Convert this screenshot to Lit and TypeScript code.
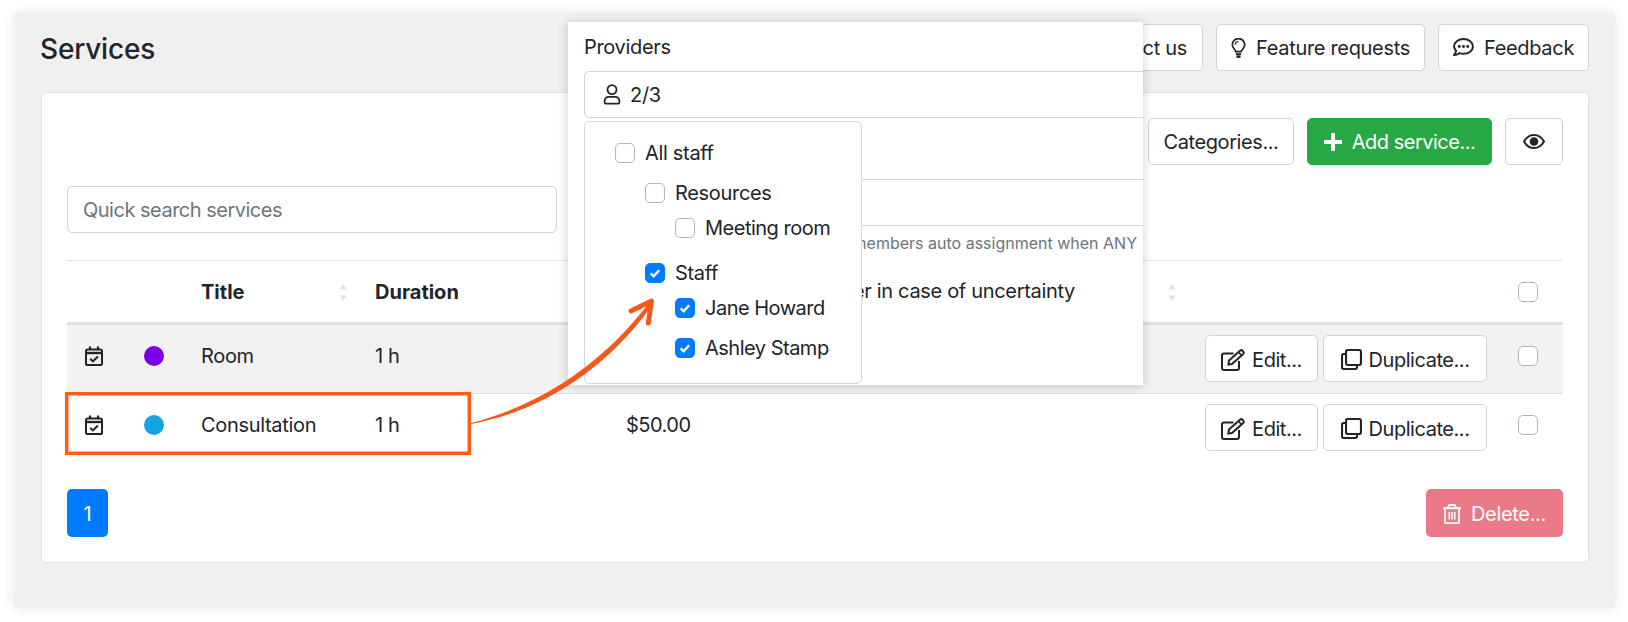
import { LitElement, html, css, svg } from "lit";
import { customElement } from "lit/decorators.js";

const calendar = html`<svg class="cal" viewBox="0 0 18 20" width="18" height="20" fill="none" stroke="#212529">
  <rect x="1" y="3.5" width="16" height="15.5" rx="1.6" stroke-width="2"/>
  <path d="M1 7h16" stroke-width="2.4"/>
  <path d="M5 .5v3M13 .5v3" stroke-width="2.2"/>
  <path d="M5.2 12.8l2.7 2.6 5-5" stroke-width="2.1"/>
</svg>`;

const editIcon = html`<svg class="ic" viewBox="0 0 24 22" width="24" height="22" fill="none" stroke="#212529" stroke-width="2">
  <path d="M12.5 4.5H3a2 2 0 0 0-2 2V19a2 2 0 0 0 2 2h13a2 2 0 0 0 2-2v-7"/>
  <path d="M8 11.5L19.2 1.6a1.6 1.6 0 0 1 2.2.1l.9 1a1.6 1.6 0 0 1-.1 2.2L11 15l-3.6.6z"/>
  <path d="M17.6 3.2l3.2 3.5" stroke-width="1.6"/>
</svg>`;

const cloneIcon = html`<svg class="ic" viewBox="0 0 20 20" width="21" height="21" fill="none" stroke="#212529" stroke-width="2">
  <rect x="4.8" y="1" width="14.2" height="14.2" rx="1.6"/>
  <path d="M4.8 4.8H2.6A1.6 1.6 0 0 0 1 6.4v11A1.6 1.6 0 0 0 2.6 19h11a1.6 1.6 0 0 0 1.6-1.6v-2.2"/>
</svg>`;

const trash = html`<svg viewBox="0 0 18 20" width="18" height="20" fill="none" stroke="#fff" stroke-width="1.8">
  <path d="M0 4.2h18" stroke-width="2"/>
  <path d="M5.5 4V2.4A1.4 1.4 0 0 1 6.9 1h4.2a1.4 1.4 0 0 1 1.4 1.4V4"/>
  <path d="M2 4.2v14a1 1 0 0 0 1 1h12a1 1 0 0 0 1-1v-14"/>
  <path d="M6.3 8v7.6M9 8v7.6M11.7 8v7.6" stroke-width="1.6"/>
</svg>`;

const bulb = html`<svg viewBox="0 0 15 21" width="15" height="20" fill="none" stroke="#212529">
  <path d="M4.6 14.4c-.4-2.4-3.6-4-3.6-7.3a6.5 6.5 0 0 1 13 0c0 3.3-3.200 4.900-3.600 7.300z" stroke-width="1.8"/>
  <path d="M4.800 17h5.400" stroke-width="2"/>
  <path d="M5.400 19.600h4.200" stroke-width="2.600"/>
  <path d="M4 7a3.400 3.400 0 0 1 3.400-3.300" stroke-width="1.200"/>
</svg>`;

const chat = html`<svg viewBox="0 0 20 18" width="21" height="19" fill="none" stroke="#212529" stroke-width="1.900">
  <path d="M10 1C5 1 1 4 1 7.800c0 1.700.8 3.200 2 4.400-.3 1.500-1.200 3-2 4 2 0 3.800-.8 5-1.800 1.200.4 2.600.6 4 .6 5 0 9-3 9-6.900S15 1 10 1z"/>
  <g fill="#212529" stroke="none"><circle cx="6" cy="8" r="1.400"/><circle cx="10" cy="8" r="1.400"/><circle cx="14" cy="8" r="1.400"/></g>
</svg>`;

const eye = html`<svg viewBox="0 0 22 15" width="22" height="15" fill="none" stroke="#212529" stroke-width="2">
  <path d="M1 7.500c2.400-4.200 6-6.500 10-6.500s7.600 2.300 10 6.500c-2.400 4.200-6 6.500-10 6.500S3.400 11.700 1 7.500z"/>
  <circle cx="11" cy="7.500" r="4.300" fill="#212529" stroke="none"/>
</svg>`;

const user = html`<svg viewBox="0 0 16 20" width="18" height="21" fill="none" stroke="#212529" stroke-width="1.700">
  <circle cx="8" cy="5.300" r="4.300"/>
  <path d="M1 16.200c0-2.300 1.700-4 4-4h6c2.300 0 4 1.700 4 4v1.300a1.200 1.200 0 0 1-1.200 1.200H2.200A1.200 1.200 0 0 1 1 17.500z"/>
</svg>`;

const plus = html`<svg viewBox="0 0 18 18" width="18" height="18" fill="none" stroke="#fff" stroke-width="4">
  <path d="M9 0v18M0 9h18"/>
</svg>`;

const sort = html`<svg class="sort" viewBox="0 0 8 17" width="8" height="17" fill="#dee2e6">
  <path d="M4 0l3.600 5.600H.4zM4 17L.4 11.400h7.200z"/>
</svg>`;

const tick = svg`<path d="M5.600 10.300l3 2.900 5.600-6" fill="none" stroke="#fff" stroke-width="2.400"/>`;

function box(checked = false) {
  return html`<span class="cb ${checked ? "on" : ""}">${checked
    ? html`<svg viewBox="0 0 20 20" width="20" height="20">${tick}</svg>`
    : ""}</span>`;
}

function row(color: string, title: string, price: string, cls: string) {
  return html`<div class="row ${cls}">
    <div class="c1">${calendar}</div>
    <div class="c2"><span class="dot" style="background:${color}"></span></div>
    <div class="c3">${title}</div>
    <div class="c4">1 h</div>
    <div class="c5">${price}</div>
    <div class="c6">
      <button class="btn small w-edit">${editIcon}Edit...</button>
      <button class="btn small w-dup">${cloneIcon}Duplicate...</button>
    </div>
    <div class="c7">${box()}</div>
  </div>`;
}

@customElement("app-root")
export class AppRoot extends LitElement {
  static styles = css`
    :host {
      display: block;
      position: relative;
      width: 1628px;
      height: 622px;
      overflow: hidden;
      background: #fff;
      font-family: Inter, "Liberation Sans", sans-serif;
      font-size: 20px;
      line-height: 30px;
      letter-spacing: -0.32px;
      color: #212529;
      padding: 13px 13px 14px 14px;
      box-sizing: border-box;
    }
    * { box-sizing: border-box; }
    .window {
      height: 595px;
      background: #f0f0f0;
      box-shadow: 0 0 12px rgba(0, 0, 0, 0.1);
      border-radius: 4px;
      padding: 11px 26px 0 27px;
    }
    .head {
      display: flex;
      align-items: flex-start;
      height: 47px;
      gap: 13px;
    }
    h1 {
      margin: 0 auto 0 -1px;
      padding-top: 2px;
      font-size: 28px;
      font-weight: 500;
      line-height: 47px;
      letter-spacing: -0.2px;
    }
    .btn {
      display: inline-flex;
      align-items: center;
      justify-content: center;
      gap: 10px;
      height: 47px;
      padding: 0 15px;
      font: inherit;
      letter-spacing: inherit;
      color: #212529;
      background: #fff;
      border: 1.25px solid #ced4da;
      border-radius: 5px;
      white-space: nowrap;
    }
    .btn.small { gap: 7px; padding: 2px 0 0; letter-spacing: -0.45px; }
    .w-edit { width: 113px; }
    .w-dup { width: 164px; }
    .w-feature { width: 209px; padding: 0; }
    .w-feedback { width: 151px; padding: 0; }
    .card {
      margin-top: 21px;
      height: 471px;
      background: #fff;
      border: 1px solid #dee2e6;
      border-radius: 5px;
      padding: 25px 25px 0 25px;
      display: flex;
      flex-direction: column;
    }
    .tools {
      display: flex;
      justify-content: flex-end;
      gap: 13px;
    }
    .cats { width: 146px; padding: 0; letter-spacing: -0.42px; }
    .add {
      width: 185px;
      padding: 0;
      color: #fff;
      background: #28a745;
      border-color: #28a745;
      gap: 10px;
      letter-spacing: -0.5px;
    }
    .view { width: 58px; padding: 0; }
    .search {
      margin-top: 21px;
      width: 490px;
      height: 47px;
      border: 1.25px solid #ced4da;
      border-radius: 5px;
      padding: 0 15px;
      display: flex;
      align-items: center;
      color: #6c757d;
      letter-spacing: -0.5px;
    }
    .table { margin-top: 27px; }
    .row {
      display: grid;
      grid-template-columns: 60px 58px 174px 251px 578px 315px 59px;
      align-items: start;
    }
    .row.hd {
      border-top: 1.25px solid #dee2e6;
      border-bottom: 3px solid #dee2e6;
      height: 65px;
      font-weight: 700;
      letter-spacing: 0;
      padding-top: 16px;
    }
    .row.r1 {
      background: #f2f2f2;
      height: 69px;
      border-bottom: 1.25px solid #dee2e6;
      padding-top: 16px;
    }
    .row.r2 { height: 68px; padding-top: 16px; }
    .c1 { padding-left: 18px; height: 30px; display: flex; align-items: center; }
    .c2 { padding-left: 17px; height: 30px; display: flex; align-items: center; }
    .c3, .c4, .c5 { padding-left: 16px; }
    .hd .c3, .hd .c5 {
      display: flex;
      justify-content: space-between;
      align-items: center;
      padding-right: 12px;
    }
    .hd .c5 { justify-content: flex-end; height: 30px; }
    .c5 { letter-spacing: -0.5px; }
    .c6 {
      margin-top: -6px;
      padding-right: 16px;
      display: flex;
      justify-content: flex-end;
      gap: 5px;
    }
    .c7 { padding-left: 15px; height: 30px; display: flex; align-items: center; }
    .dot { width: 20px; height: 20px; border-radius: 50%; }
    .cal { display: block; }
    .ic { display: block; }
    .sort { display: block; }
    .cb {
      display: block;
      flex: none;
      width: 20px;
      height: 20px;
      background: #fff;
      border: 1.5px solid #adb5bd;
      border-radius: 5px;
    }
    .cb.on { background: #007bff; border-color: #007bff; }
    .cb.on svg { display: block; margin: -1.5px; }
    .foot {
      margin-top: 27px;
      display: flex;
      justify-content: space-between;
    }
    .page {
      width: 41px;
      height: 48px;
      padding-top: 2px;
      background: #007bff;
      color: #fff;
      border-radius: 5px;
      display: flex;
      align-items: center;
      justify-content: center;
    }
    .del {
      width: 137px;
      height: 48px;
      padding-top: 2px;
      background: #ea7a87;
      color: #fff;
      border-radius: 5px;
      display: flex;
      align-items: center;
      justify-content: center;
      gap: 10px;
    }
    /* provider popup, lying over the page */
    .popup {
      position: absolute;
      left: 568px;
      top: 22px;
      width: 575px;
      height: 363px;
      overflow: hidden;
      background: #fff;
      box-shadow: 0 1px 10px rgba(0, 0, 0, 0.2);
      padding: 10px 0 0 16px;
    }
    .label { height: 30px; }
    .select {
      margin-top: 9px;
      width: 640px;
      height: 47px;
      border: 1.25px solid #ced4da;
      border-radius: 5px;
      padding-left: 18px;
      display: flex;
      align-items: center;
      gap: 9px;
    }
    .field {
      margin-top: 61px;
      width: 640px;
      height: 47px;
      border: 1.25px solid #ced4da;
      border-radius: 5px;
    }
    .help {
      margin-top: 5px;
      width: 553px;
      text-align: right;
      white-space: nowrap;
      font-size: 16px;
      line-height: 24px;
      letter-spacing: 0;
      color: #6c757d;
    }
    .uncertain {
      margin-top: 21px;
      width: 491px;
      text-align: right;
      white-space: nowrap;
    }
    .menu {
      position: absolute;
      left: 16px;
      top: 99px;
      width: 278px;
      height: 263px;
      background: #fff;
      border: 1.25px solid #d5d9de;
      border-radius: 5px;
      display: flex;
      flex-direction: column;
      padding: 16px 0 0 30px;
    }
    .opt {
      display: flex;
      align-items: center;
      gap: 10px;
      height: 30px;
      white-space: nowrap;
    }
    .l1 { margin-left: 30px; }
    .l2 { margin-left: 60px; letter-spacing: -0.5px; }
    .g10 { margin-top: 10px; }
    .g5 { margin-top: 5px; }
    .g15 { margin-top: 15px; }
    .marks {
      position: absolute;
      left: 0;
      top: 0;
      pointer-events: none;
    }
  `;

  render() {
    return html`
      <div class="window">
        <div class="head">
          <h1>Services</h1>
          <button class="btn">Contact us</button>
          <button class="btn w-feature">${bulb}Feature requests</button>
          <button class="btn w-feedback">${chat}Feedback</button>
        </div>
        <div class="card">
          <div class="tools">
            <button class="btn cats">Categories...</button>
            <button class="btn add">${plus}Add service...</button>
            <button class="btn view">${eye}</button>
          </div>
          <div class="search">Quick search services</div>
          <div class="table">
            <div class="row hd">
              <div class="c1"></div>
              <div class="c2"></div>
              <div class="c3">Title${sort}</div>
              <div class="c4">Duration</div>
              <div class="c5">${sort}</div>
              <div class="c6"></div>
              <div class="c7">${box()}</div>
            </div>
            ${row("#7a00e8", "Room", "", "r1")}
            ${row("#17a2e2", "Consultation", "$50.00", "r2")}
          </div>
          <div class="foot">
            <div class="page">1</div>
            <div class="del">${trash}Delete...</div>
          </div>
        </div>
      </div>

      <div class="popup">
        <div class="label">Providers</div>
        <div class="select">${user}2/3</div>
        <div class="field"></div>
        <div class="help">members auto assignment when ANY</div>
        <div class="uncertain">er in case of uncertainty</div>
        <div class="menu">
          <label class="opt">${box()}All staff</label>
          <label class="opt l1 g10">${box()}Resources</label>
          <label class="opt l2 g5">${box()}Meeting room</label>
          <label class="opt l1 g15">${box(true)}Staff</label>
          <label class="opt l2 g5">${box(true)}Jane Howard</label>
          <label class="opt l2 g10">${box(true)}Ashley Stamp</label>
        </div>
      </div>

      <svg class="marks" width="1628" height="622" viewBox="0 0 1628 622" fill="none">
        <rect x="66.700" y="393.700" width="402.600" height="59.600" stroke="#ff5c14" stroke-width="3.500"/>
        <path d="M471 423 C532 407 596 372 648 304 L651 307 C600 376 536 412 471 424z" fill="#f4581a"/>
        <path d="M631 311 L651.500 301 L648.300 323" stroke="#f4581a" stroke-width="5" stroke-linecap="round" stroke-linejoin="round"/>
      </svg>
    `;
  }
}
